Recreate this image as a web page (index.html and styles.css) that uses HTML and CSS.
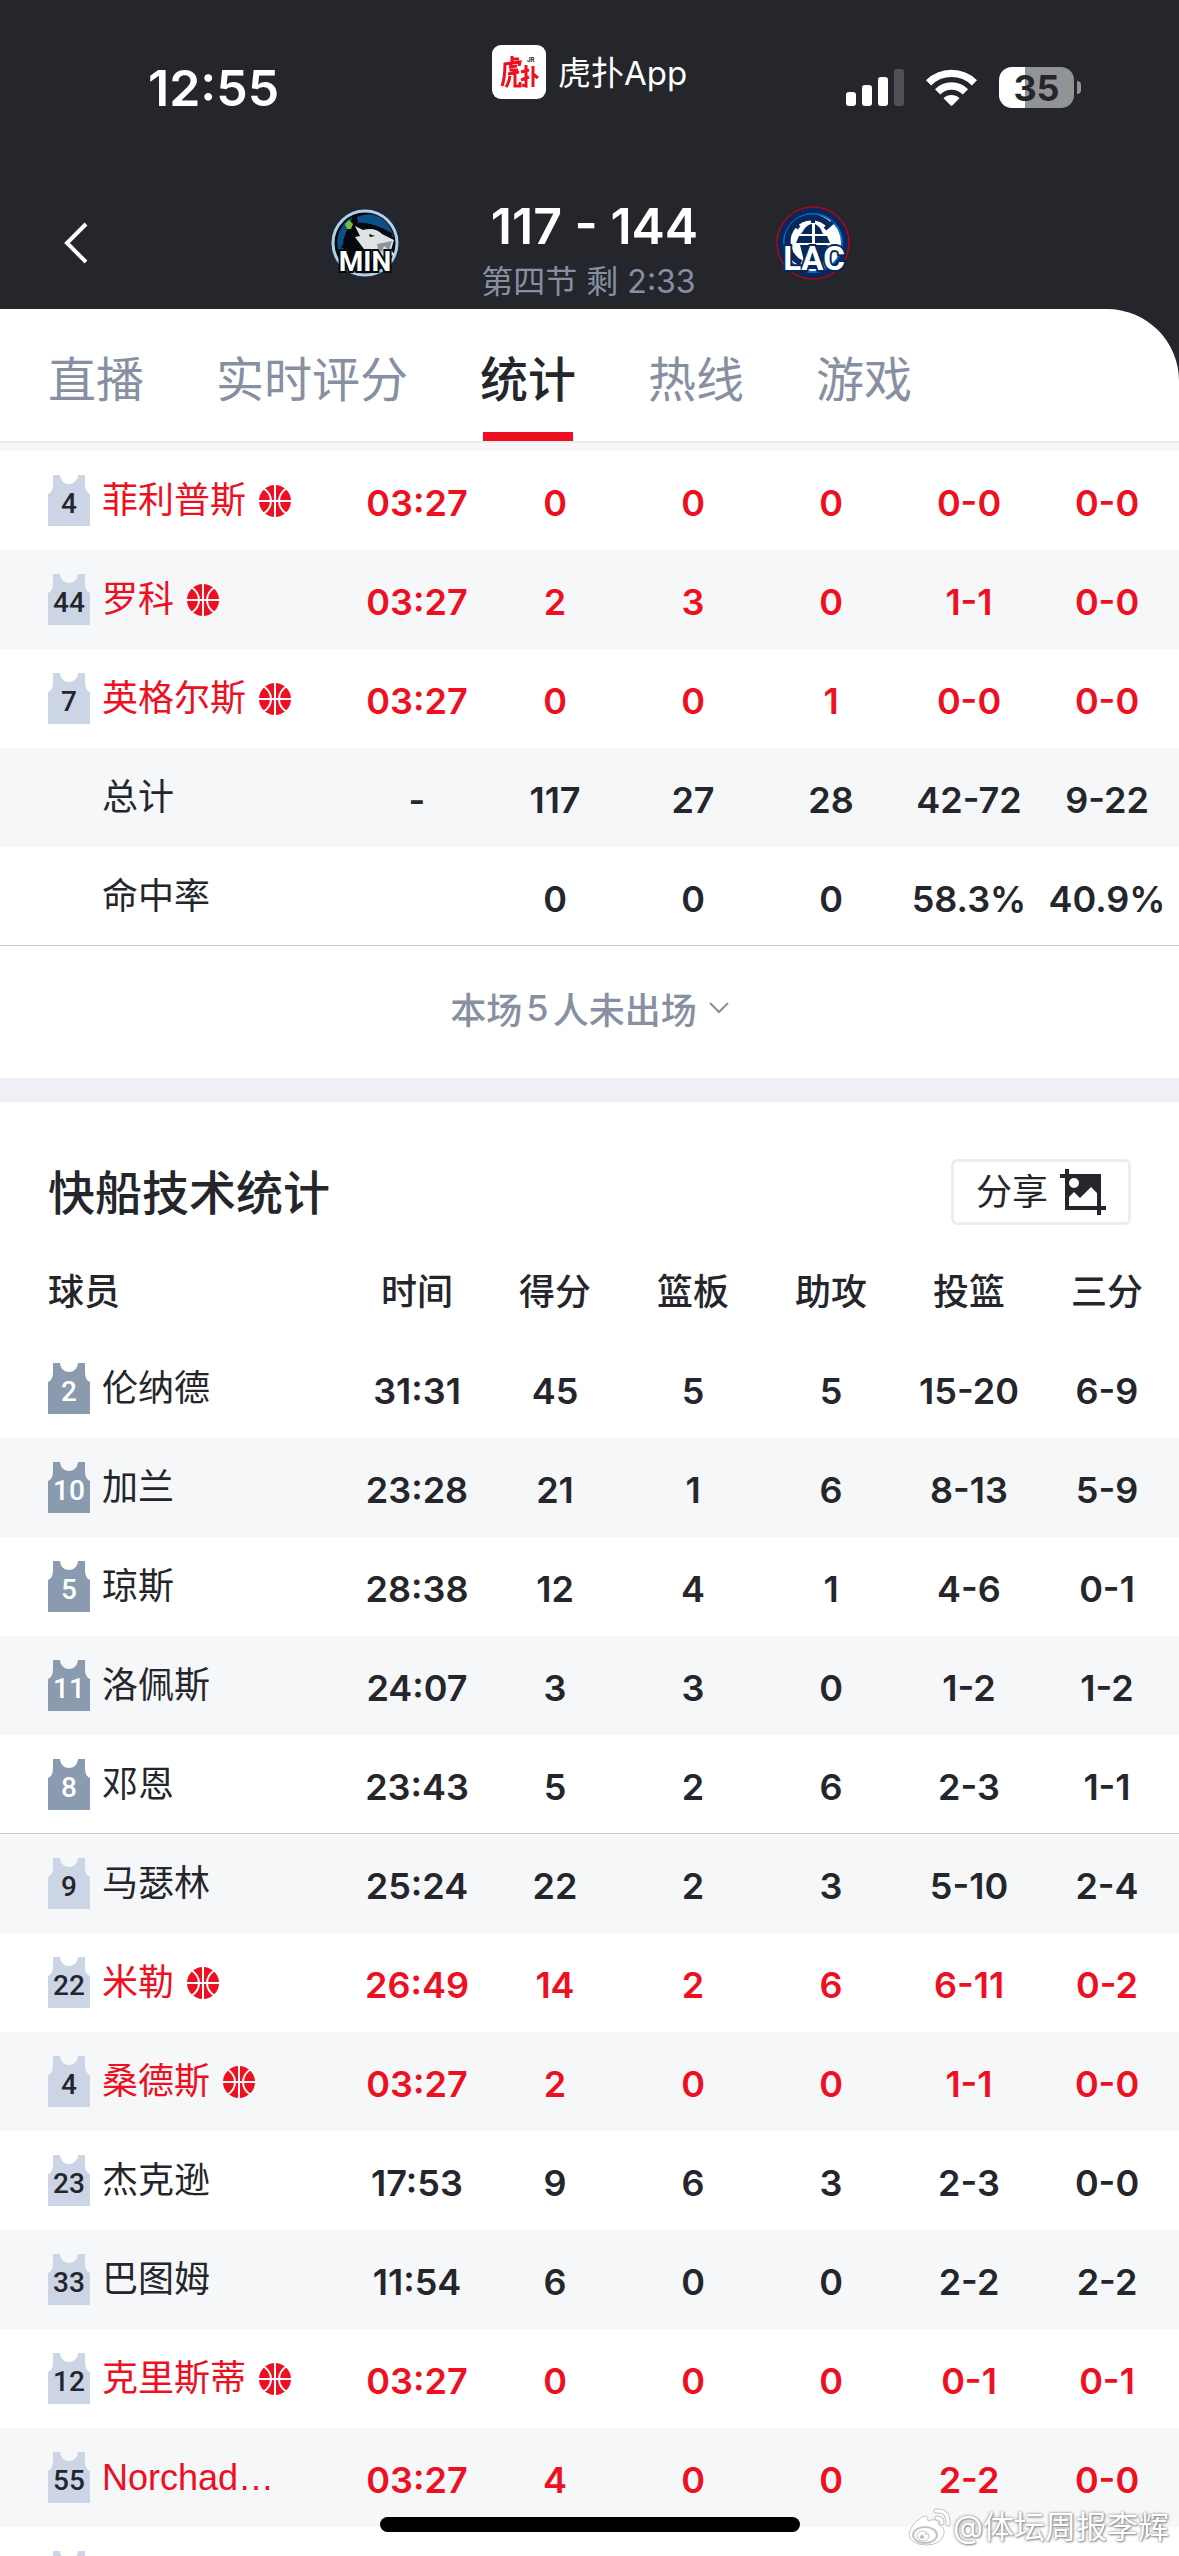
FILE: index.html
```html
<!DOCTYPE html>
<html lang="zh-CN">
<head>
<meta charset="utf-8">
<meta name="viewport" content="width=device-width">
<title>虎扑 - 比赛统计</title>
<link rel="stylesheet" href="styles.css">
</head>
<body>
<svg class="defs" aria-hidden="true">
  <defs>
    <mask id="seams">
      <circle cx="16" cy="16" r="16" fill="#fff"/>
      <path d="M16 0V32M0 16H32M4 3Q12 8 12 16T4 29M28 3Q20 8 20 16T28 29" fill="none" stroke="#000" stroke-width="2"/>
    </mask>
    <symbol id="ball" viewBox="0 0 32 32"><rect width="32" height="32" fill="currentColor" mask="url(#seams)"/></symbol>
  </defs>
</svg>
<div class="screen">
  <header class="top">
    <div class="status">
      <time class="clock">12:55</time>
      <div class="app">
        <span class="app-icon">
          <svg width="54" height="54" viewBox="0 0 54 54"><rect width="54" height="54" rx="9" fill="#fff"/>
            <g fill="none" stroke="#ee0f21" stroke-width="3">
              <path d="M20 11V18M20 14H27M12 19L28 17L27 21M13 18Q13 33 10 41M17 22L25 21M19 19V25H26M16 29L27 27M18 31Q17 38 14 42M23 29V41H28V37"/>
              <path d="M29 27L37 25M34 20V41L30 40M29 35L37 32M41 21V42M41 29L46 33"/>
            </g>
            <text class="jr" x="35" y="17">JR</text>
          </svg>
        </span>
        <span class="app-name">虎扑App</span>
      </div>
      <div class="signals">
        <svg width="58" height="37" viewBox="0 0 58 37"><g fill="#fff"><rect y="23" width="10" height="14" rx="3"/><rect x="16" y="16" width="10" height="21" rx="3"/><rect x="32" y="8" width="10" height="29" rx="3"/><rect x="48" width="10" height="37" rx="3" opacity=".2"/></g></svg>
        <svg width="51" height="37" viewBox="0 0 51 37"><g fill="none" stroke="#fff" stroke-width="7.4"><path d="M2.600 13.800A32.500 32.500 0 0 1 48.400 13.800"/><path d="M11.600 22.800A19.600 19.600 0 0 1 39.400 22.800"/></g><path d="M17.500 29.300A11.500 11.500 0 0 1 33.500 29.300L26.500 36.300Q25.500 37.300 24.500 36.300Z" fill="#fff"/></svg>
        <span class="battery">35</span>
      </div>
    </div>
    <div class="match">
      <button class="back" type="button" aria-label="返回"><svg width="24" height="42" viewBox="0 0 24 42"><path d="M22 2L3 21L22 40" fill="none" stroke="#fff" stroke-width="4"/></svg></button>
      <svg class="logo" width="72" height="72" viewBox="0 0 72 72">
        <circle cx="36" cy="36" r="34.500" fill="#12284b"/><circle cx="36" cy="36" r="32" fill="#05080d" stroke="#b4cfdf" stroke-width="3"/>
        <path d="M28 10Q44 3 56 14Q63 21 65 31Q54 20 38 19L29 16Z" fill="#0a4f86"/>
        <path d="M10 25Q15 14 23 10L20 24L14 33L18 49L25 58H18Q4 44 10 25Z" fill="#0a4f86"/>
        <path d="M30 17Q45 17 63 28" fill="none" stroke="#05080d" stroke-width="3"/>
        <path d="M26 19L34 23Q46 20 53 27L65 33L62 43L66 48L36 54L35 42L26 30L31 29Z" fill="#dfe2e5"/>
        <path d="M48 37L63 34L60 43L55 39L53 45L49 42Z" fill="#8d959c"/>
        <path d="M40 27L46 29L41 30Z" fill="#05080d"/>
        <path d="M19 20L23 31H21L26 41H23L28 53H10L15 41H12L17 31H15Z" fill="#05080d"/>
        <path d="M20 13L24 17L22 22H18L16 17Z" fill="#74bf3d"/>
        <text class="team" x="36" y="64" stroke="#05080d">MIN</text>
      </svg>
      <div class="score">
        <strong class="points">117 - 144</strong>
        <span class="period">第四节 剩 2:33</span>
      </div>
      <svg class="logo" width="74" height="74" viewBox="0 0 74 74">
        <circle cx="37" cy="37" r="36" fill="#06285a" stroke="#b3060f" stroke-width="1.500"/><circle cx="37" cy="37" r="29" fill="#fff" stroke="#1467d2" stroke-width="2"/>
        <path d="M54 20A24 24 0 1 0 25 57" fill="none" stroke="#06285a" stroke-width="6"/>
        <path d="M37 9V17M17 16L23 22M49 23L57 16" stroke="#06285a" stroke-width="4"/>
        <path d="M29 22Q33 18 36 18V28H25ZM39 18Q44 20 47 28H39ZM23 30H36V37H20ZM39 30H51L54 37H39ZM24 39H52L45 63H30Z" fill="#06285a"/>
        <text class="team large" x="38" y="64" stroke="#06285a">LAC</text>
      </svg>
    </div>
  </header>

  <main class="sheet">
    <nav class="tabs">
      <a class="tab" href="#live">直播</a>
      <a class="tab" href="#rating">实时评分</a>
      <a class="tab current" href="#stats" aria-current="page">统计</a>
      <a class="tab" href="#hot">热线</a>
      <a class="tab" href="#game">游戏</a>
    </nav>

    <section class="team-stats" id="stats">
      <table class="stats">
        <colgroup><col class="c-name"><col class="c"><col class="c"><col class="c"><col class="c"><col class="c"><col class="c-last"></colgroup>
        <tbody>
          <tr class="on"><th scope="row"><div class="player"><span class="jersey">4</span>菲利普斯<svg class="ball"><use href="#ball"/></svg></div></th><td>03:27</td><td>0</td><td>0</td><td>0</td><td>0-0</td><td>0-0</td></tr>
          <tr class="on"><th scope="row"><div class="player"><span class="jersey">44</span>罗科<svg class="ball"><use href="#ball"/></svg></div></th><td>03:27</td><td>2</td><td>3</td><td>0</td><td>1-1</td><td>0-0</td></tr>
          <tr class="on"><th scope="row"><div class="player"><span class="jersey">7</span>英格尔斯<svg class="ball"><use href="#ball"/></svg></div></th><td>03:27</td><td>0</td><td>0</td><td>1</td><td>0-0</td><td>0-0</td></tr>
          <tr><th scope="row"><div class="player summary">总计</div></th><td>-</td><td>117</td><td>27</td><td>28</td><td>42-72</td><td>9-22</td></tr>
          <tr class="line"><th scope="row"><div class="player summary">命中率</div></th><td></td><td>0</td><td>0</td><td>0</td><td>58.3%</td><td>40.9%</td></tr>
        </tbody>
      </table>
      <button class="more" type="button">本场<span class="count">5</span>人未出场<svg width="20" height="12" viewBox="0 0 20 12"><path d="M1 1L10 10L19 1" fill="none" stroke="currentColor" stroke-width="2"/></svg></button>
    </section>

    <section class="team-stats">
      <div class="heading">
        <h2>快船技术统计</h2>
        <button class="share" type="button">分享
          <svg width="46" height="46" viewBox="0 0 46 46"><path fill="#25262c" fill-rule="evenodd" d="M5 0H9V5H41V37H46V41H41V46H37V41H5V9H0V5H5ZM9 28V37H37V24L31 18L20 29L14 23ZM14 9A5 5 0 1 0 14 19A5 5 0 1 0 14 9Z"/></svg>
        </button>
      </div>
      <table class="stats">
        <colgroup><col class="c-name"><col class="c"><col class="c"><col class="c"><col class="c"><col class="c"><col class="c-last"></colgroup>
        <thead><tr><th class="first" scope="col">球员</th><th scope="col">时间</th><th scope="col">得分</th><th scope="col">篮板</th><th scope="col">助攻</th><th scope="col">投篮</th><th scope="col">三分</th></tr></thead>
        <tbody>
          <tr><th scope="row"><div class="player"><span class="jersey starter">2</span>伦纳德</div></th><td>31:31</td><td>45</td><td>5</td><td>5</td><td>15-20</td><td>6-9</td></tr>
          <tr><th scope="row"><div class="player"><span class="jersey starter">10</span>加兰</div></th><td>23:28</td><td>21</td><td>1</td><td>6</td><td>8-13</td><td>5-9</td></tr>
          <tr><th scope="row"><div class="player"><span class="jersey starter">5</span>琼斯</div></th><td>28:38</td><td>12</td><td>4</td><td>1</td><td>4-6</td><td>0-1</td></tr>
          <tr><th scope="row"><div class="player"><span class="jersey starter">11</span>洛佩斯</div></th><td>24:07</td><td>3</td><td>3</td><td>0</td><td>1-2</td><td>1-2</td></tr>
          <tr class="line"><th scope="row"><div class="player"><span class="jersey starter">8</span>邓恩</div></th><td>23:43</td><td>5</td><td>2</td><td>6</td><td>2-3</td><td>1-1</td></tr>
          <tr><th scope="row"><div class="player"><span class="jersey">9</span>马瑟林</div></th><td>25:24</td><td>22</td><td>2</td><td>3</td><td>5-10</td><td>2-4</td></tr>
          <tr class="on"><th scope="row"><div class="player"><span class="jersey">22</span>米勒<svg class="ball"><use href="#ball"/></svg></div></th><td>26:49</td><td>14</td><td>2</td><td>6</td><td>6-11</td><td>0-2</td></tr>
          <tr class="on"><th scope="row"><div class="player"><span class="jersey">4</span>桑德斯<svg class="ball"><use href="#ball"/></svg></div></th><td>03:27</td><td>2</td><td>0</td><td>0</td><td>1-1</td><td>0-0</td></tr>
          <tr><th scope="row"><div class="player"><span class="jersey">23</span>杰克逊</div></th><td>17:53</td><td>9</td><td>6</td><td>3</td><td>2-3</td><td>0-0</td></tr>
          <tr><th scope="row"><div class="player"><span class="jersey">33</span>巴图姆</div></th><td>11:54</td><td>6</td><td>0</td><td>0</td><td>2-2</td><td>2-2</td></tr>
          <tr class="on"><th scope="row"><div class="player"><span class="jersey">12</span>克里斯蒂<svg class="ball"><use href="#ball"/></svg></div></th><td>03:27</td><td>0</td><td>0</td><td>0</td><td>0-1</td><td>0-1</td></tr>
          <tr class="on"><th scope="row"><div class="player"><span class="jersey">55</span>Norchad…</div></th><td>03:27</td><td>4</td><td>0</td><td>0</td><td>2-2</td><td>0-0</td></tr>
          <tr><th scope="row"><div class="player"><span class="jersey"></span></div></th><td></td><td></td><td></td><td></td><td></td><td></td></tr>
        </tbody>
      </table>
    </section>
  </main>

  <div class="home-bar"></div>
  <div class="credit">
    <svg width="43" height="38" viewBox="0 0 43 38"><g fill="#fff" stroke="#c4c4c4" stroke-width="1"><path d="M14 9Q20 6 20 13Q30 9 31 17Q37 19 36 26Q33 37 18 37Q2 36 1 27Q2 17 14 9Z"/><ellipse cx="17" cy="27" rx="12" ry="8" stroke-width="2"/><ellipse cx="15" cy="28" rx="6" ry="5"/></g><circle cx="14" cy="29" r="2" fill="#bbb"/><circle cx="18" cy="26" r="1" fill="#bbb"/><g fill="none" stroke="#c4c4c4" stroke-width="5" stroke-linecap="round"><path d="M28 3Q41 2 40 16M29 10Q34 10 34 15"/><path d="M28 3Q41 2 40 16M29 10Q34 10 34 15" stroke="#fff" stroke-width="3"/></g></svg>
    <span>@体坛周报李辉</span>
  </div>
</div>
</body>
</html>
```
FILE: styles.css
```css
* { box-sizing: border-box; }

body {
  margin: 0;
  background: #25262c;
  color: #25262c;
  font-family: Inter, "Noto Sans CJK SC", sans-serif;
  font-size: 36px;
}

button {
  padding: 0;
  border: 0;
  background: none;
  color: inherit;
  font: inherit;
}

svg { display: block; flex: none; }
.defs { position: absolute; width: 0; height: 0; }

.screen {
  position: relative;
  height: 100vh;
  overflow: hidden;
}

/* Status bar */
.top { color: #fff; }

.status {
  display: grid;
  grid-template-columns: 1fr auto 1fr;
  align-items: start;
  height: 177px;
  padding: 45px 96px 0 148px;
}

.clock {
  padding-top: 13px;
  font-size: 50px;
  font-weight: 600;
  line-height: 60px;
}

.app {
  display: flex;
  align-items: center;
  gap: 12px;
  margin-left: -52px;
}

.app-name { padding-bottom: 3px; font-size: 33px; }
.jr { font: 700 6px Inter, sans-serif; fill: #25262c; }

.signals {
  display: flex;
  align-items: center;
  justify-content: flex-end;
  gap: 22px;
  padding-top: 22px;
}

.battery {
  position: relative;
  width: 75px;
  height: 41px;
  margin-right: 9px;
  border-radius: 13px;
  background: linear-gradient(90deg, #fff 35%, #929397 35%);
  color: #25262c;
  font-size: 36px;
  font-weight: 700;
  line-height: 42px;
  text-align: center;
}

.battery::after {
  content: "";
  position: absolute;
  top: 14px;
  right: -7px;
  width: 4px;
  height: 13px;
  border-radius: 0 6px 6px 0;
  background: #929397;
}

/* Match bar */
.match {
  position: relative;
  display: flex;
  align-items: center;
  justify-content: center;
  gap: 78px;
  height: 132px;
}

.back { position: absolute; left: 64px; }

.team {
  font: 700 28px Roboto, sans-serif;
  fill: #fff;
  stroke-width: 4px;
  paint-order: stroke;
  text-anchor: middle;
}

.team.large { font-size: 33px; }

.score {
  display: flex;
  flex-direction: column;
  align-items: center;
  gap: 8px;
  padding-top: 14px;
}

.points {
  padding-left: 12px;
  font-size: 50px;
  font-weight: 600;
  line-height: 56px;
}

.period { color: #8790a2; font-size: 32px; line-height: 40px; }

/* Sheet and tabs */
.sheet {
  overflow: hidden;
  border-top-right-radius: 72px;
  background: #fff;
}

.tabs {
  display: flex;
  gap: 72px;
  height: 134px;
  padding: 0 48px;
  border-bottom: 2px solid #ebecf1;
}

.tab {
  position: relative;
  height: 132px;
  color: #8790a2;
  font-size: 48px;
  line-height: 141px;
  text-decoration: none;
}

.tab.current {
  color: #25262c;
  font-weight: 500;
}

.tab.current::after {
  content: "";
  position: absolute;
  right: 3px;
  bottom: 0;
  left: 3px;
  height: 9px;
  background: #ee0f21;
}

/* Player tables */
.team-stats:first-of-type {
  border-top: 8px solid #f5f7f9;
  border-bottom: 24px solid #eff0f5;
}

.stats {
  width: 100%;
  border-collapse: collapse;
  table-layout: fixed;
}

.c { width: 138px; }
.c-last { width: 141px; }

.stats tr { height: 99px; }
.stats tbody tr:nth-child(even) { background: #f5f7f9; }
.stats tr.line { box-shadow: inset 0 -1px #c5c8d3; }
.stats tr.on { color: #ee0f21; }

.stats td,
.stats th {
  padding: 4px 0 0;
  font-weight: 600;
  line-height: 44px;
  text-align: center;
  white-space: nowrap;
}

.stats td:last-child,
.stats th:last-child { padding-right: 3px; }

.stats thead th { font-weight: 500; }
.stats th.first { padding-left: 48px; text-align: left; }

.stats tbody th {
  padding: 0 0 0 48px;
  font-family: "Liberation Sans", "Noto Sans CJK SC", sans-serif;
  font-weight: 400;
  text-align: left;
}

.player {
  display: flex;
  align-items: center;
  gap: 12px;
  height: 51px;
  line-height: 55px;
}

.summary { padding-left: 54px; }
.ball { width: 32px; height: 32px; margin-left: 1px; }

.jersey {
  width: 42px;
  height: 51px;
  padding-top: 7px;
  background: #ccd5e6;
  clip-path: path("M5 0H12C13 12 29 12 30 0H37V9Q37 17 42 19V51H0V19Q5 17 5 9Z");
  color: #25262c;
  font: 500 28px/44px Roboto, sans-serif;
  text-align: center;
}

.jersey.starter { background: #8a9bb0; color: #fff; }

.more {
  display: flex;
  align-items: center;
  justify-content: center;
  width: 100%;
  height: 132px;
  padding-bottom: 8px;
  color: #8790a2;
  font-weight: 500;
}

.more svg { margin-left: 12px; }
.count { margin: 0 4px; }

.heading {
  display: flex;
  align-items: center;
  justify-content: space-between;
  height: 138px;
  padding: 42px 48px 0;
}

.heading h2 {
  margin: 0;
  padding-bottom: 6px;
  font-size: 47px;
  font-weight: 500;
}

.share {
  display: flex;
  align-items: center;
  justify-content: center;
  gap: 12px;
  width: 180px;
  height: 66px;
  border: 3px solid #ecedf2;
  border-radius: 6px;
  line-height: 44px;
}

/* Overlays */
.home-bar {
  position: absolute;
  bottom: 24px;
  left: 50%;
  width: 420px;
  height: 15px;
  margin-left: -210px;
  border-radius: 8px;
  background: #000;
}

.credit {
  position: absolute;
  right: 10px;
  bottom: 10px;
  display: flex;
  align-items: center;
  gap: 2px;
  color: #fff;
  font-size: 31px;
  line-height: 38px;
  text-shadow: 0 0 3px #777, 1px 1px 2px #999;
}
```
